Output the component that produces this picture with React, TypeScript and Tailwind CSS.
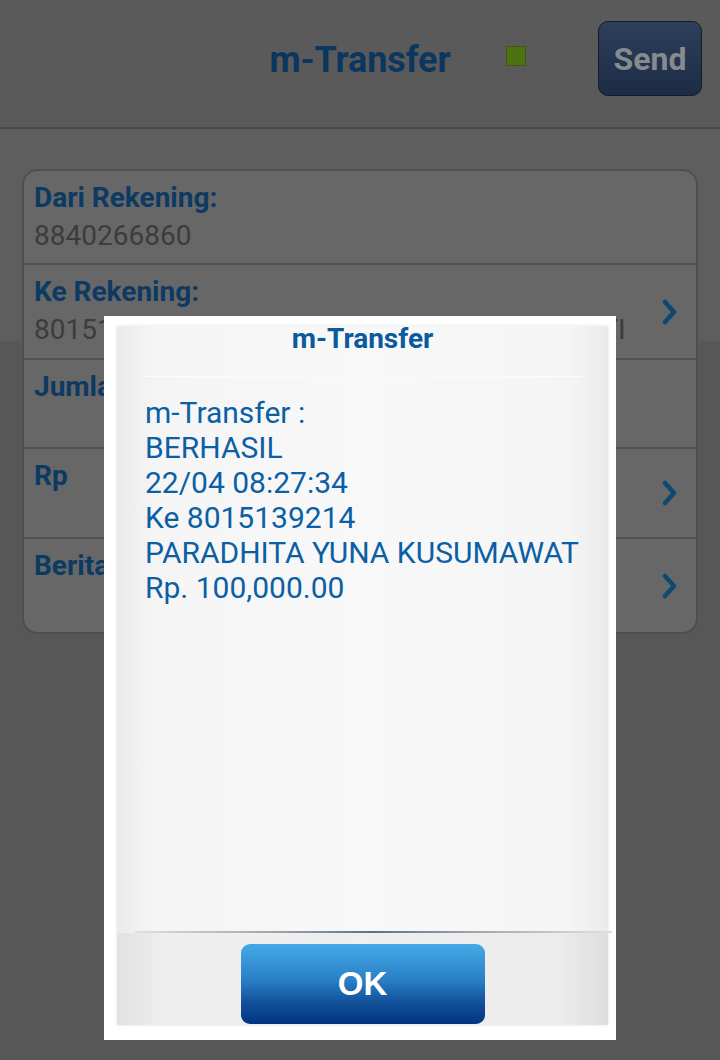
import React from "react";

const Chevron = () => (
  <svg width="20" height="26" viewBox="0 0 20 26" className="shrink-0">
    <polyline points="5,3 14,13 5,23" fill="none" stroke="#0c4a73" strokeWidth="4.5" strokeLinecap="round" strokeLinejoin="round" />
  </svg>
);

const rows = [
  { label: "Dari Rekening:", value: "8840266860", h: "h-[94px]", chevron: false },
  { label: "Ke Rekening:", value: "8015139214 - PARADHITA YUNA KUSUMAWATI", h: "h-[95px]", chevron: true },
  { label: "Jumlah", value: "", h: "h-[89px]", chevron: false },
  { label: "Rp", value: "", h: "h-[90px]", chevron: true },
  { label: "Berita", value: "", h: "h-[93px]", chevron: true },
];

const lines = [
  "m-Transfer :",
  "BERHASIL",
  "22/04 08:27:34",
  "Ke 8015139214",
  "PARADHITA YUNA KUSUMAWAT",
  "Rp. 100,000.00",
];

export default function App() {
  return (
    <div
      className="relative w-[720px] h-[1060px] overflow-hidden bg-[#575757]"
      style={{ fontFamily: "Roboto, 'Noto Sans', sans-serif" }}
    >
      {/* Header */}
      <div className="h-[129px] bg-[#5a5a5a] border-b-2 border-[#4a4a4a] grid grid-cols-[1fr_auto_1fr] items-center">
        <div />
        <div className="text-[36px] font-bold text-[#0b375f] tracking-[-0.1px] leading-none pb-[8px]">m-Transfer</div>
        <div className="flex items-center pr-[18px]">
          <div className="ml-[55px] w-[20px] h-[20px] bg-[#4e7111] border border-[#3f5a0e] mb-[16px]" />
          <div className="ml-auto w-[104px] h-[75px] rounded-[10px] border border-[#151c28] bg-[linear-gradient(to_bottom,#2e3f5b,#1c2c46)] flex items-center justify-center mb-[10px]">
            <span className="text-[32px] font-bold text-[#878a8e]">Send</span>
          </div>
        </div>
      </div>

      {/* Body */}
      <div className="pt-[40px] h-[931px] bg-[linear-gradient(to_bottom,#5e5e5e_0,#5e5e5e_211px,#575757_214px)]">
        <div className="mx-[22px] rounded-[16px] bg-[#676767] border-2 border-[#4f4f4f] overflow-hidden">
          {rows.map((r, i) => (
            <div
              key={i}
              className={`${r.h} flex items-center pl-[10px] pr-[16px] ${i < rows.length - 1 ? "border-b-2 border-[#515151]" : ""}`}
            >
              <div className="flex-1 min-w-0 self-start pt-[11px]">
                <div className="text-[28px] font-bold text-[#0d3a63] leading-[32px]">{r.label}</div>
                {r.value && (
                  <div className="text-[28px] text-[#3c3c3c] leading-[44px] truncate">{r.value}</div>
                )}
              </div>
              {r.chevron && <Chevron />}
            </div>
          ))}
        </div>
      </div>

      {/* Dialog */}
      <div className="absolute left-[104px] top-[316px] w-[512px] h-[724px] bg-white pt-[10px] pl-[13px] pr-[8px] pb-[15px]">
        <div className="h-full flex flex-col bg-[linear-gradient(to_right,#ebebeb,#f5f5f5_8%,#f8f8f8_50%,#f5f5f5_92%,#eaeaea)] shadow-[0_0_3px_rgba(0,0,0,0.12)]">
          <div className="h-[50px] flex flex-col items-center">
            <div className="text-[28px] font-bold text-[#0a5a9e] leading-[26px]">m-Transfer</div>
          </div>
          <div className="mx-[26px] h-[1px] bg-[#fbfbfb]" />
          <div className="flex-1 pl-[28px] pt-[18px]">
            {lines.map((l, i) => (
              <div key={i} className="text-[30px] text-[#0b5fa5] leading-[35px] whitespace-nowrap">
                {l}
              </div>
            ))}
          </div>
          <div className="ml-[18px] mr-[-4px] h-[2px] bg-[linear-gradient(to_right,#e0e0e0,#9aa4ae_30%,#5f7186_50%,#9aa4ae_70%,#e0e0e0)]" />
          <div className="h-[92px] flex items-start justify-center pt-[11px] bg-[linear-gradient(to_right,#e2e2e2,#eeeeee_10%,#efefef_50%,#ececec_90%,#dedede)]">
            <div className="w-[244px] h-[80px] rounded-[9px] bg-[linear-gradient(to_bottom,#44aae6,#2a7fc6_45%,#114e98_75%,#023480)] flex items-center justify-center">
              <span className="text-[33px] font-bold text-white" style={{ fontFamily: "'Liberation Sans', Arial, sans-serif" }}>OK</span>
            </div>
          </div>
        </div>
      </div>
    </div>
  );
}
